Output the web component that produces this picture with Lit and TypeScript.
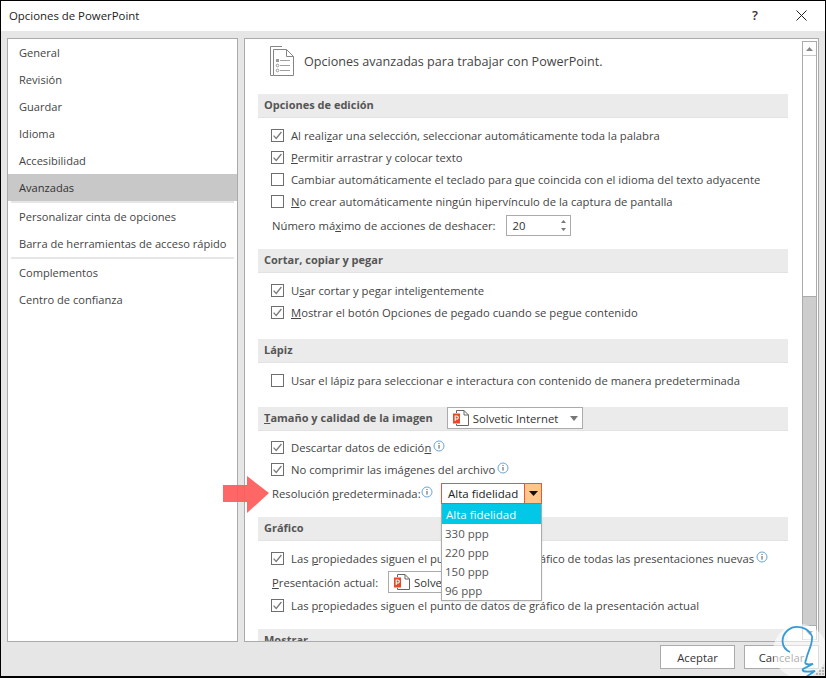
import { LitElement, html, css, svg } from "lit";
import { customElement } from "lit/decorators.js";

const check = svg`<svg class="chk" width="13" height="13" viewBox="0 0 13 13"><path d="M2.6 6.6 L5.2 9.4 L10.4 3" fill="none" stroke="#7a7a7a" stroke-width="1.3"/></svg>`;

function cb(on: boolean) {
  return html`<span class="box">${on ? check : ""}</span>`;
}
const info = html`<svg class="info" width="12" height="12" viewBox="0 0 12 12"><circle cx="6" cy="6" r="5" fill="#fff" stroke="#6aa5d6" stroke-width="1"/><rect x="5.5" y="5" width="1" height="3.6" fill="#555"/><rect x="5.5" y="3" width="1" height="1" fill="#555"/></svg>`;
const ppt = html`<svg class="ppt" width="18" height="17" viewBox="0 0 18 17"><path d="M4.5 3V.5H12L16.5 5V15.5H4.5V14" fill="#fff" stroke="#666" stroke-width="1"/><path d="M12 .5V5H16.5" fill="none" stroke="#666"/><rect x="1" y="3.5" width="7" height="10" fill="#e8492a"/><path d="M3.2 11V6H4.8a1.4 1.4 0 0 1 0 3H3.2" fill="none" stroke="#fff" stroke-width="1.1"/></svg>`;
const caret = html`<svg class="caret" width="8" height="5" viewBox="0 0 8 5"><path d="M0 0H8L4 5Z" fill="#777"/></svg>`;

@customElement("app-root")
export class AppRoot extends LitElement {
  static styles = css`
    :host { display: block; width: 826px; height: 678px; font-family: "Open Sans", "Noto Sans", sans-serif; font-size: 11.28px; color: #444; }
    * { box-sizing: border-box; }
    .win { position: relative; width: 826px; height: 678px; background: #e6e6e6; border: 1px solid #000; border-width: 1px 1px 2px 1px; display: flex; flex-direction: column; overflow: hidden; }
    .title { height: 30px; background: #fff; display: flex; align-items: center; padding: 0 18px 0 8px; color: #222; font-size: 11.4px; flex: none; }
    .title .t { flex: 1; padding-bottom: 1px; }
    .q { color: #333; font-size: 13px; font-weight: 600; margin-right: 38px; margin-bottom: 3px; }
    .x { margin-bottom: 2px; }
    .main { flex: none; height: 611px; display: flex; gap: 6px; padding: 7px 6px 0 6px; }
    .nav { width: 231px; background: #fff; border: 1px solid #ababab; flex: none; font-size: 11.1px; }
    .nav .i { height: 27px; padding-left: 11px; display: flex; align-items: center; }
    .nav .sel { background: #c8c8c8; color: #333; }
    .nav .sep { height: 2px; background: #e6e6e6; margin: 0 3px; }
    .content { flex: 1; background: #fff; border: 1px solid #ababab; display: flex; overflow: hidden; min-width: 0; }
    .scrollarea { flex: 1; padding: 0 14px 0 13px; min-width: 0; overflow: hidden; }
    .top { height: 55px; display: flex; align-items: flex-start; padding: 7px 0 0 12px; gap: 9px; font-size: 12.58px; color: #444; }
    .top span { margin-top: 7px; }
    .sec { height: 24px; background: #ebebeb; border-bottom: 1px solid #e2e2e2; padding: 0 0 2px 6px; display: flex; align-items: center; font-weight: 700; color: #555; font-size: 11px; gap: 14px; flex: none; }
    .rows { padding: 6px 0 0 13px; display: flex; flex-direction: column; }
    .row { height: 22px; display: flex; align-items: center; gap: 7px; white-space: nowrap; }
    .row.tight { gap: 3px; }
    .row.num { height: 26px; padding-left: 1px; gap: 6px; }
    .row.pres { height: 24px; margin-top: 1px; padding-left: 1px; gap: 6px; }
    .row.res { height: 26px; padding-left: 1px; }
    .box { width: 13px; height: 13px; border: 1px solid #6e6e6e; background: #fff; display: inline-block; flex: none; position: relative; }
    .chk { position: absolute; left: -1px; top: -1px; }
    .info { margin: 0 0 2px -1px; flex: none; }
    .row.res .info { margin-left: -3px; }
    .tight .box { margin-right: 4px; }
    .g1 { height: 131px; }
    .g2 { height: 66px; }
    .g3 { height: 44px; }
    .g4 { height: 86px; padding-top: 5px; }
    .g5 { height: 88px; }
    .spin { margin-left: 4px; width: 65px; height: 21px; border: 1px solid #ababab; display: flex; align-items: center; padding-left: 6px; justify-content: space-between; color: #333; }
    .spin svg { margin-right: 3px; }
    .combo { width: 136px; height: 22px; border: 1px solid #ababab; background: #fff; display: flex; align-items: center; padding-left: 4px; gap: 3px; font-weight: 400; color: #333; font-size: 11.3px; align-self: flex-start; flex: none; }
    .combo .caret { margin-left: auto; margin-right: 4px; }
    .row .combo { margin-left: 4px; align-self: center; }
    .ppt { flex: none; }
    .scroll { width: 15px; flex: none; margin: 2px 1px 1px 0; border-left: 1px solid #ababab; border-right: 1px solid #ababab; background: #fff; display: flex; flex-direction: column; }
    .arrowbtn { height: 15px; border-top: 1px solid #ababab; border-bottom: 1px solid #c8c8c8; display: flex; align-items: center; justify-content: center; flex: none; background: #fff; }
    .thumb { height: 241px; background: #fff; border-bottom: 1px solid #ababab; flex: none; }
    .track { flex: 1; background: #cdcdcd; }
    .foot { flex: 1; display: flex; justify-content: flex-end; gap: 9px; padding: 3px 6px 0 0; }
    .btn { width: 75px; height: 24px; background: #fff; border: 1px solid #ababab; display: flex; align-items: center; justify-content: center; color: #333; }
    .arrow { position: absolute; left: 220px; top: 473px; }
    .dd { position: absolute; left: 440px; top: 482px; width: 101px; display: flex; flex-direction: column; }
    .ddhead { height: 21px; border: 1px solid #e9573a; background: #fff; display: flex; color: #222; font-size: 11.5px; }
    .ddhead .v { flex: 1; padding-left: 6px; display: flex; align-items: center; }
    .ddhead .b { width: 17px; border-left: 1px solid #e9573a; background: #fdc78c; display: flex; align-items: center; justify-content: center; }
    .ddlist { background: #fff; border: 1px solid #ababab; border-top: 0; height: 97px; color: #555; box-shadow: 0 1px 2px rgba(0,0,0,.1); font-size: 11.5px; }
    .opt { height: 19px; padding-left: 3px; display: flex; align-items: center; }
    .opt.on { background: #00c8e6; color: #f4fcff; height: 20px; padding-left: 4px; }
    .logo { position: absolute; left: 0; top: 0; pointer-events: none; }
    .grip { position: absolute; right: 1px; bottom: 1px; }
  `;

  render() {
    return html`<div class="win">
      <div class="title"><span class="t">Opciones de PowerPoint</span><span class="q">?</span>
        <svg class="x" width="11" height="11" viewBox="0 0 11 11"><path d="M.5 .5L10.5 10.5M10.5 .5L.5 10.5" stroke="#222" stroke-width="1"/></svg></div>
      <div class="main">
        <div class="nav">
          <div class="i">General</div><div class="i">Revisión</div><div class="i">Guardar</div><div class="i">Idioma</div><div class="i">Accesibilidad</div>
          <div class="i sel">Avanzadas</div>
          <div class="sep"></div>
          <div class="i">Personalizar cinta de opciones</div><div class="i">Barra de herramientas de acceso rápido</div>
          <div class="sep"></div>
          <div class="i">Complementos</div><div class="i">Centro de confianza</div>
        </div>
        <div class="content">
          <div class="scrollarea">
            <div class="top">
              <svg width="25" height="31" viewBox="0 0 25 31"><path d="M3.5 29.5H.5V.5H12" fill="none" stroke="#858585"/><path d="M3.5 3.5H16.5L23.5 10.5V29.5H3.5Z" fill="#fff" stroke="#858585"/><path d="M16.5 3.5V10.5H23.5" fill="none" stroke="#858585"/><path d="M10 14.5H20M10 19.5H20M10 24.5H20" stroke="#a0a0a0"/><rect x="6" y="13" width="3" height="3" fill="#999"/><circle cx="7.5" cy="19.5" r="1.3" fill="none" stroke="#999"/><circle cx="7.5" cy="24.5" r="1.3" fill="none" stroke="#999"/></svg>
              <span>Opciones avanzadas para trabajar con PowerPoint.</span>
            </div>
            <div class="sec">Opciones de edición</div>
            <div class="rows g1">
              <div class="row">${cb(true)}<span>Al reali<u>z</u>ar una selección, seleccionar automáticamente toda la palabra</span></div>
              <div class="row">${cb(true)}<span><u>P</u>ermitir arrastrar y colocar texto</span></div>
              <div class="row">${cb(false)}<span>Cambiar automáticamente el teclado para <u>q</u>ue coincida con el idioma del texto adyacente</span></div>
              <div class="row">${cb(false)}<span><u>N</u>o crear automáticamente ningún hipervínculo de la captura de pantalla</span></div>
              <div class="row num"><span>Número má<u>x</u>imo de acciones de deshacer:</span>
                <div class="spin">20<svg width="7" height="15" viewBox="0 0 7 15"><path d="M3.5 2L6 5H1ZM3.5 13L1 10H6Z" fill="#777"/></svg></div></div>
            </div>
            <div class="sec">Cortar, copiar y pegar</div>
            <div class="rows g2">
              <div class="row">${cb(true)}<span>U<u>s</u>ar cortar y pegar inteligentemente</span></div>
              <div class="row">${cb(true)}<span><u>M</u>ostrar el botón Opciones de pegado cuando se pegue contenido</span></div>
            </div>
            <div class="sec">Lápiz</div>
            <div class="rows g3">
              <div class="row">${cb(false)}<span>Usar el lápiz para seleccionar e interactura con contenido de manera predeterminada</span></div>
            </div>
            <div class="sec"><span><u>T</u>amaño y calidad de la imagen</span><div class="combo">${ppt}<span>Solvetic Internet</span>${caret}</div></div>
            <div class="rows g4">
              <div class="row tight">${cb(true)}<span>Descartar datos de edició<u>n</u></span>${info}</div>
              <div class="row tight">${cb(true)}<span>No comprimir las imá<u>g</u>enes del archivo</span>${info}</div>
              <div class="row res tight"><span>Resolución <u>p</u>redeterminada:</span>${info}</div>
            </div>
            <div class="sec">Gráfico</div>
            <div class="rows g5">
              <div class="row tight">${cb(true)}<span>Las <u>p</u>ropiedades siguen el punto de datos de gráfico de todas las presentaciones nuevas</span>${info}</div>
              <div class="row pres"><span><u>P</u>resentación actual:</span><div class="combo">${ppt}<span>Solvetic Internet</span>${caret}</div></div>
              <div class="row">${cb(true)}<span>Las p<u>r</u>opiedades siguen el punto de datos de gráfico de la presentación actual</span></div>
            </div>
            <div class="sec">Mostrar</div>
          </div>
          <div class="scroll">
            <div class="arrowbtn"><svg width="7" height="4" viewBox="0 0 7 4"><path d="M3.5 0L7 4H0Z" fill="#888"/></svg></div>
            <div class="thumb"></div>
            <div class="track"></div>
            <div class="arrowbtn"><svg width="7" height="4" viewBox="0 0 7 4"><path d="M0 0H7L3.5 4Z" fill="#555"/></svg></div>
          </div>
        </div>
      </div>
      <div class="foot"><div class="btn">Aceptar</div><div class="btn">Cancelar</div></div>

      <svg class="grip" width="8" height="8" viewBox="0 0 8 8"><path d="M6 0h2v2H6zM3 3h2v2H3zM6 3h2v2H6zM0 6h2v2H0zM3 6h2v2H3zM6 6h2v2H6z" fill="#b5b5b5"/></svg>

      <svg class="arrow" width="52" height="40" viewBox="0 0 52 40"><path d="M2 11H26V2L48 19L26 39V28H2Z" fill="#ff5a5a" fill-opacity=".93"/></svg>

      <div class="dd">
        <div class="ddhead"><div class="v">Alta fidelidad</div><div class="b"><svg width="9" height="5" viewBox="0 0 9 5"><path d="M0 0H9L4.5 5Z" fill="#111"/></svg></div></div>
        <div class="ddlist">
          <div class="opt on">Alta fidelidad</div>
          <div class="opt">330 ppp</div><div class="opt">220 ppp</div><div class="opt">150 ppp</div><div class="opt">96 ppp</div>
        </div>
      </div>

      <svg class="logo" width="826" height="678" viewBox="1 1 826 678">
        <circle cx="800" cy="651" r="27" fill="#fff" fill-opacity=".6"/>
        <path d="M812 636C808 627 795 624 788 630C780 637 781 648 790 652M812 636C813 645 808 650 806 660C804 664 806 665 813 664L803 669C801 672 808 672 815 671L806 677" fill="none" stroke="#3a9ad6" stroke-width="1.8"/>
      </svg>
    </div>`;
  }
}
